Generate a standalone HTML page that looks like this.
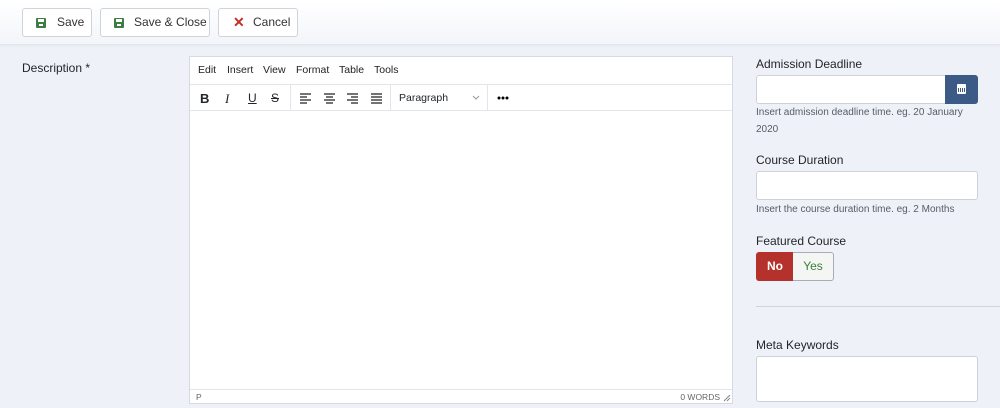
<!DOCTYPE html>
<html><head><meta charset="utf-8"><style>
*{box-sizing:border-box;margin:0;padding:0}
body{width:1000px;height:408px;overflow:hidden;background:#eef1f8;font-family:"Liberation Sans",sans-serif;color:#22262a;position:relative}
.top{position:absolute;left:0;top:0;width:1000px;height:45px;background:linear-gradient(#fff,#f3f5fa);border-bottom:1px solid #e3e7ef;box-shadow:0 1px 3px rgba(0,0,0,.04)}
.btn{position:absolute;top:8px;height:29px;background:#fff;border:1px solid #cfd4db;border-radius:3px;font-size:12px;line-height:27px;color:#333;white-space:nowrap}
.ico{position:absolute;left:13px;top:9px;width:10px;height:10px;background:#3e7c43;border-radius:1px}
.ico:before{content:"";position:absolute;left:2px;top:1px;width:6px;height:3px;background:#fff}
.ico:after{content:"";position:absolute;left:3px;top:6px;width:4px;height:2px;background:#fff}
.abs{position:absolute;white-space:nowrap}
.lbl{position:absolute;font-size:12px;color:#22262a;white-space:nowrap}
.help{position:absolute;font-size:10px;color:#555d66;white-space:nowrap}
.inp{position:absolute;background:#fff;border:1px solid #ccd2da;border-radius:3px}
.m{position:absolute;top:64px;font-size:10.5px;color:#222}
</style></head><body>
<div class="top"></div>
<div class="btn" style="left:22px;width:70px"><span class="ico"></span><span style="position:absolute;left:34px">Save</span></div>
<div class="btn" style="left:100px;width:110px"><span class="ico"></span><span style="position:absolute;left:33px">Save &amp; Close</span></div>
<div class="btn" style="left:218px;width:80px"><span style="position:absolute;left:14px;color:#c0302a;font-size:14px;font-weight:bold">✕</span><span style="position:absolute;left:34px">Cancel</span></div>

<div class="lbl" style="left:22px;top:61px">Description *</div>

<div class="abs" style="left:189px;top:56px;width:544px;height:348px;background:#fff;border:1px solid #d6dae0">
 <div style="position:absolute;left:0;top:27px;width:100%;height:27px;border-top:1px solid #e2e5e9;border-bottom:1px solid #e2e5e9"></div>
 <div style="position:absolute;left:100px;top:27px;width:1px;height:27px;background:#e2e5e9"></div>
 <div style="position:absolute;left:200px;top:27px;width:1px;height:27px;background:#e2e5e9"></div>
 <div style="position:absolute;left:297px;top:27px;width:1px;height:27px;background:#e2e5e9"></div>
 <div style="position:absolute;top:34px;left:10px;font-size:13px;font-weight:bold">B</div>
 <div style="position:absolute;top:34px;left:35px;font-size:13px;font-style:italic;font-family:'Liberation Serif',serif">I</div>
 <div style="position:absolute;top:34px;left:58px;font-size:12px;text-decoration:underline">U</div>
 <div style="position:absolute;top:34px;left:81px;font-size:12px;text-decoration:line-through">S</div>
 <svg style="position:absolute;left:110px;top:36px" width="84" height="12" stroke="#222" stroke-width="1.3">
  <path d="M0 1h11M0 4h7M0 7h11M0 10h7"/>
  <path d="M24 1h11M26 4h7M24 7h11M26 10h7"/>
  <path d="M47 1h11M51 4h7M47 7h11M51 10h7"/>
  <path d="M71 1h11M71 4h11M71 7h11M71 10h11"/>
 </svg>
 <div style="position:absolute;top:35px;left:209px;font-size:10.5px">Paragraph</div>
 <svg style="position:absolute;left:282px;top:38px" width="8" height="6"><path d="M1 1l3 3 3-3" stroke="#999" fill="none"/></svg>
 <svg style="position:absolute;left:307px;top:39px" width="12" height="4"><circle cx="2" cy="2" r="1.5"/><circle cx="6" cy="2" r="1.5"/><circle cx="10" cy="2" r="1.5"/></svg>
 <div style="position:absolute;left:0;top:332px;width:100%;height:1px;background:#e2e5e9"></div>
 <div style="position:absolute;left:6px;top:335px;font-size:8.5px;color:#666">P</div>
 <div style="position:absolute;right:12px;top:335px;font-size:8.5px;color:#666">0 WORDS</div>
 <svg style="position:absolute;right:1px;top:337px" width="8" height="8" stroke="#888"><path d="M7 1L1 7M7 4L4 7"/></svg>
</div>
<div class="m" style="left:198px">Edit</div>
<div class="m" style="left:227px">Insert</div>
<div class="m" style="left:263px">View</div>
<div class="m" style="left:296px">Format</div>
<div class="m" style="left:339px">Table</div>
<div class="m" style="left:374px">Tools</div>

<div class="lbl" style="left:756px;top:57px">Admission Deadline</div>
<div class="inp" style="left:756px;top:75px;width:190px;height:29px;border-radius:3px 0 0 3px"></div>
<div class="abs" style="left:945px;top:75px;width:33px;height:29px;background:#3c5a86;border-radius:0 3px 3px 0">
 <div style="position:absolute;left:12px;top:9px;width:9px;height:10px;background:#fff;border-radius:1px"></div>
 <div style="position:absolute;left:13px;top:13px;width:7px;height:4px;background:repeating-linear-gradient(90deg,#3c5a86 0 1px,#fff 1px 2px)"></div>
</div>
<div class="help" style="left:756px;top:107px">Insert admission deadline time. eg. 20 January</div>
<div class="help" style="left:756px;top:124px">2020</div>

<div class="lbl" style="left:756px;top:153px">Course Duration</div>
<div class="inp" style="left:756px;top:171px;width:222px;height:29px"></div>
<div class="help" style="left:756px;top:204px">Insert the course duration time. eg. 2 Months</div>

<div class="lbl" style="left:756px;top:234px">Featured Course</div>
<div class="abs" style="left:756px;top:252px;width:38px;height:29px;background:#b5312b;border-radius:3px 0 0 3px;color:#fff;font-size:12px;font-weight:bold;text-align:center;line-height:29px">No</div>
<div class="abs" style="left:793px;top:252px;width:41px;height:29px;background:#f3f6f3;border:1px solid #aab;border-left:none;border-radius:0 3px 3px 0;color:#3b7d3e;font-size:12px;text-align:center;line-height:27px">Yes</div>

<div class="abs" style="left:756px;top:306px;width:244px;height:1px;background:#cfd4dc"></div>

<div class="lbl" style="left:756px;top:338px">Meta Keywords</div>
<div class="inp" style="left:756px;top:356px;width:222px;height:46px"></div>
</body></html>
